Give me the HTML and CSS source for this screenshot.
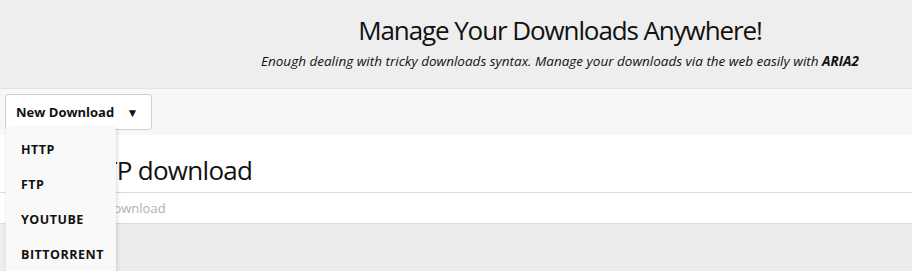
FILE: index.html
```html
<!DOCTYPE html>
<html lang="en">

<head>
	<meta charset="UTF-8">
	<meta name="viewport" content="width=device-width, initial-scale=1.0">
	<title>Aria2 Web Downloads</title>
	<link rel="stylesheet" href="styles.css">
</head>

<body>
	<header class="hero">
		<h1>Manage Your Downloads Anywhere!</h1>
		<p>Enough dealing with tricky downloads syntax. Manage your downloads via the web easily with <strong>ARIA2</strong></p>
	</header>

	<div class="toolbar">
		<div class="dropdown">
			<button class="dropdown-toggle" type="button">New Download <span class="caret">&#9660;</span></button>
			<ul class="dropdown-menu">
				<li><a href="#">HTTP</a></li>
				<li><a href="#">FTP</a></li>
				<li><a href="#">YOUTUBE</a></li>
				<li><a href="#">BITTORRENT</a></li>
			</ul>
		</div>
	</div>

	<section class="panel">
		<h2>HTTP download</h2>
		<div class="field">
			<input type="text" placeholder="URL to download">
		</div>
	</section>

	<div class="page-rest"></div>
</body>

</html>
```

FILE: styles.css
```css
body {
	font-family: "Open Sans", "Noto Sans", Arial, sans-serif;
	margin: 0;
	color: #111;
	background: #ededed;
}

.hero {
	background: #eeeeee;
	border-bottom: 1px solid #e2e2e2;
	padding: 12px 0 0 208px;
	height: 76px;
	text-align: center;
}

.hero h1 {
	margin: 0;
	font-size: 26px;
	font-weight: 400;
	line-height: 36px;
	letter-spacing: -1.1px;
}

.hero p {
	margin: 4px 0 0;
	font-size: 13.5px;
	font-style: italic;
	letter-spacing: 0;
}

.hero strong {
	font-weight: 700;
}

.toolbar {
	background: #f7f7f7;
	padding: 5px;
	height: 36px;
}

.dropdown {
	position: relative;
	display: inline-block;
}

.dropdown-toggle {
	font-family: inherit;
	font-size: 13px;
	font-weight: 700;
	color: #111;
	background: #fff;
	border: 1px solid #cfcfcf;
	border-radius: 3px;
	height: 36px;
	width: 147px;
	padding: 0 10px;
	text-align: left;
	cursor: pointer;
}

.caret {
	margin-left: 9px;
	font-size: 12px;
}

.dropdown-menu {
	position: absolute;
	top: 34px;
	left: 1px;
	width: 110px;
	margin: 0;
	padding: 4px 0 0;
	list-style: none;
	background: #f9f9f9;
	border-radius: 0 4px 0 0;
	box-shadow: 1px 1px 4px rgba(0, 0, 0, 0.15);
	z-index: 10;
}

.dropdown-menu a {
	display: block;
	padding: 9px 15px;
	font-size: 12.5px;
	font-weight: 700;
	letter-spacing: 0.5px;
	line-height: 17px;
	color: #111;
	text-decoration: none;
}

.panel {
	background: #fff;
}

.panel h2 {
	margin: 0;
	padding: 18px 0 0 71px;
	height: 39px;
	font-size: 26px;
	font-weight: 400;
	line-height: 34px;
	letter-spacing: -0.7px;
	border-bottom: 1px solid #d9d9d9;
}

.field {
	border-bottom: 1px solid #d9d9d9;
}

.field input {
	display: block;
	width: 100%;
	box-sizing: border-box;
	height: 30px;
	border: 0;
	padding: 0 0 0 62px;
	font-family: inherit;
	font-size: 13px;
	outline: none;
	background: #fff;
}

.field input::placeholder {
	color: #b0b0b0;
}

.page-rest {
	height: 60px;
}
```
